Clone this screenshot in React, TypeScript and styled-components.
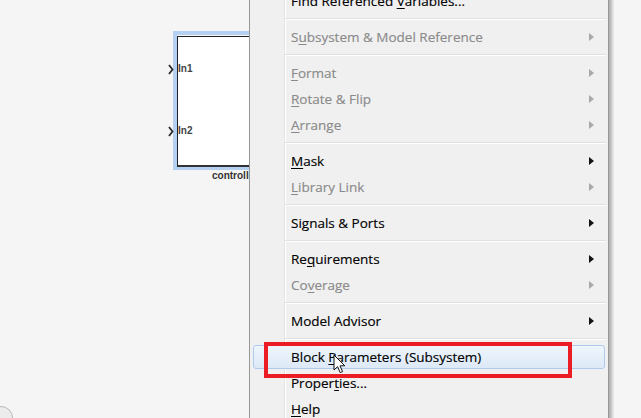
import React from 'react';
import styled, { createGlobalStyle } from 'styled-components';

const GlobalStyle = createGlobalStyle`
  html, body {
    margin: 0;
    padding: 0;
    background: #f5f5f5;
  }
`;

type Entry =
  | { kind: 'sep' }
  | { kind: 'item'; pre: string; key?: string; post: string; disabled?: boolean; sub?: boolean; active?: boolean };

const entries: Entry[] = [
  { kind: 'item', pre: 'Find Referenced ', key: 'V', post: 'ariables...' },
  { kind: 'sep' },
  { kind: 'item', pre: 'S', key: 'u', post: 'bsystem & Model Reference', disabled: true, sub: true },
  { kind: 'sep' },
  { kind: 'item', pre: '', key: 'F', post: 'ormat', disabled: true, sub: true },
  { kind: 'item', pre: '', key: 'R', post: 'otate & Flip', disabled: true, sub: true },
  { kind: 'item', pre: '', key: 'A', post: 'rrange', disabled: true, sub: true },
  { kind: 'sep' },
  { kind: 'item', pre: '', key: 'M', post: 'ask', sub: true },
  { kind: 'item', pre: '', key: 'L', post: 'ibrary Link', disabled: true, sub: true },
  { kind: 'sep' },
  { kind: 'item', pre: 'Signals & Ports', post: '', sub: true },
  { kind: 'sep' },
  { kind: 'item', pre: 'Re', key: 'q', post: 'uirements', sub: true },
  { kind: 'item', pre: 'Co', key: 'v', post: 'erage', disabled: true, sub: true },
  { kind: 'sep' },
  { kind: 'item', pre: 'Model Advisor', post: '', sub: true },
  { kind: 'sep' },
  { kind: 'item', pre: 'Block ', key: 'P', post: 'arameters (Subsystem)', active: true },
  { kind: 'item', pre: 'Proper', key: 't', post: 'ies...' },
  { kind: 'item', pre: '', key: 'H', post: 'elp' },
];

export default function App() {
  return (
    <>
      <GlobalStyle />
      <Canvas>
        <Selection>
          <Block>
            <Port>
              <Chevron viewBox="0 0 6 11" width="6" height="11">
                <path d="M1 1 L4.5 5.5 L1 10" fill="none" stroke="#2a2a2a" strokeWidth="1.8" />
              </Chevron>
              In1
            </Port>
            <Port>
              <Chevron viewBox="0 0 6 11" width="6" height="11">
                <path d="M1 1 L4.5 5.5 L1 10" fill="none" stroke="#2a2a2a" strokeWidth="1.8" />
              </Chevron>
              In2
            </Port>
          </Block>
        </Selection>
        <BlockName>controller</BlockName>
        <CornerBadge />

        <Menu>
          {entries.map((e, i) =>
            e.kind === 'sep' ? (
              <Separator key={i} />
            ) : (
              <Item key={i} $disabled={e.disabled} $active={e.active}>
                <Label>
                  {e.pre}
                  {e.key && <Key>{e.key}</Key>}
                  {e.post}
                </Label>
                {e.sub && <Arrow $disabled={e.disabled} />}
              </Item>
            )
          )}
        </Menu>

        <Callout />
        <Cursor viewBox="0 0 13 20" width="13" height="20">
          <path
            d="M1 1 L1 16 L4.6 12.6 L7.2 18.6 L9.6 17.6 L7 11.8 L11.8 11.8 Z"
            fill="#fff"
            stroke="#111"
            strokeWidth="1"
            strokeLinejoin="round"
          />
        </Cursor>
      </Canvas>
    </>
  );
}

const Canvas = styled.div`
  position: relative;
  width: 641px;
  height: 418px;
  overflow: hidden;
  background: #f5f5f5;
  font-family: "Open Sans", "Noto Sans", sans-serif;
`;

const Selection = styled.div`
  position: absolute;
  left: 173px;
  top: 31px;
  width: 120px;
  height: 139px;
  box-sizing: border-box;
  border: 4px solid #b4d0f2;
  border-right: none;
  padding: 1px 0 0 0;
`;

const Block = styled.div`
  height: 131px;
  background: #fff;
  border-left: 1.5px solid #222;
  border-top: 1.5px solid #222;
  border-bottom: 2px solid #333;
  box-sizing: border-box;
  display: flex;
  flex-direction: column;
  gap: 50px;
  padding: 26px 0 0 2px;
`;

const Port = styled.div`
  display: flex;
  align-items: center;
  margin-left: -12px;
  gap: 4px;
  font-family: "Liberation Sans", Arial, sans-serif;
  font-size: 10px;
  font-weight: bold;
  color: #444;
  line-height: 12px;
`;

const Chevron = styled.svg`
  flex: none;
`;

const BlockName = styled.div`
  position: absolute;
  left: 212px;
  top: 170px;
  font-family: "Liberation Sans", Arial, sans-serif;
  font-size: 10px;
  font-weight: bold;
  color: #333;
`;

const CornerBadge = styled.div`
  position: absolute;
  left: -11px;
  top: 406px;
  width: 22px;
  height: 22px;
  border-radius: 50%;
  background: #ececec;
  border: 1px solid #b8b8b8;
`;

const Menu = styled.div`
  position: absolute;
  left: 249px;
  top: -13px;
  width: 360px;
  box-sizing: border-box;
  border: 1px solid #979797;
  background: linear-gradient(
    to right,
    #f0f0f0 0 34px,
    #e2e3e3 34px 35px,
    #ffffff 35px 36px,
    #f0f0f0 36px
  );
  box-shadow: 3px 3px 3px rgba(0, 0, 0, 0.28);
  display: flex;
  flex-direction: column;
`;

const Separator = styled.div`
  height: 1px;
  background: #e0e0e0;
  border-bottom: 1px solid #ffffff;
  margin: 4px 2px 4px 35px;
`;

const Item = styled.div<{ $disabled?: boolean; $active?: boolean }>`
  height: 24px;
  margin: 1px 3px;
  box-sizing: border-box;
  padding: 0 10px 0 37px;
  display: flex;
  align-items: center;
  justify-content: space-between;
  border: 1px solid ${p => (p.$active ? '#aecbee' : 'transparent')};
  border-radius: 3px;
  background: ${p => (p.$active ? 'linear-gradient(#eef5fd, #dde9f7)' : 'transparent')};
  color: ${p => (p.$disabled ? '#8a8a8a' : '#000')};
  font-size: 13.5px;
  -webkit-text-stroke: 0.15px currentColor;
  white-space: nowrap;
`;

const Label = styled.span`
  line-height: 18px;
`;

const Key = styled.span`
  text-decoration: underline;
  text-underline-offset: 2px;
`;

const Arrow = styled.span<{ $disabled?: boolean }>`
  width: 0;
  height: 0;
  border-left: 5px solid ${p => (p.$disabled ? '#a8a8a8' : '#111')};
  border-top: 4px solid transparent;
  border-bottom: 4px solid transparent;
`;

const Callout = styled.div`
  position: absolute;
  left: 264px;
  top: 342px;
  width: 308px;
  height: 36px;
  box-sizing: border-box;
  border: 4px solid #ec1c24;
`;

const Cursor = styled.svg`
  position: absolute;
  left: 333px;
  top: 354px;
`;
